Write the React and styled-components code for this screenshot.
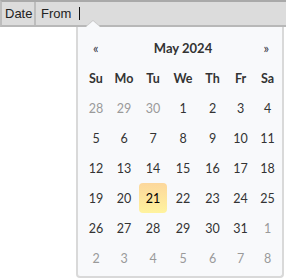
import React from 'react';
import styled, { createGlobalStyle } from 'styled-components';

const GlobalStyle = createGlobalStyle`
  html, body {
    margin: 0;
    padding: 0;
    background: #ffffff;
  }
  body {
    width: 286px;
    height: 280px;
    overflow: hidden;
    position: relative;
  }
`;

const weekdays = ['Su', 'Mo', 'Tu', 'We', 'Th', 'Fr', 'Sa'];

const weeks = [
  [[28, true], [29, true], [30, true], [1], [2], [3], [4]],
  [[5], [6], [7], [8], [9], [10], [11]],
  [[12], [13], [14], [15], [16], [17], [18]],
  [[19], [20], [21, false, true], [22], [23], [24], [25]],
  [[26], [27], [28], [29], [30], [31], [1, true]],
  [[2, true], [3, true], [4, true], [5, true], [6, true], [7, true], [8, true]],
];

function App() {
  return (
    <>
      <GlobalStyle />
      <HeaderBar>
        <HeaderCell>Date</HeaderCell>
        <HeaderCell $grow>
          From <Caret />
        </HeaderCell>
      </HeaderBar>
      <Picker>
        <Arrow />
        <Title>
          <Nav>«</Nav>
          <Month>May 2024</Month>
          <Nav>»</Nav>
        </Title>
        <Grid>
          {weekdays.map((d) => (
            <Weekday key={d}>{d}</Weekday>
          ))}
          {weeks.flat().map(([day, outside, selected], i) => (
            <Day key={i} $outside={outside} $selected={selected}>
              {day}
            </Day>
          ))}
        </Grid>
      </Picker>
    </>
  );
}

const HeaderBar = styled.div`
  display: flex;
  height: 23px;
  background: #dcdcdc;
  border-top: 2px solid #a9a9a9;
  border-bottom: 2px solid #b8b8b8;
  border-left: 2px solid #bdbdbd;
`;

const HeaderCell = styled.div`
  display: flex;
  align-items: center;
  gap: 6px;
  padding: 0 0 0 ${(p) => (p.$grow ? '5px' : '3px')};
  width: ${(p) => (p.$grow ? 'auto' : '29px')};
  flex: ${(p) => (p.$grow ? 1 : 'none')};
  border-right: ${(p) => (p.$grow ? 'none' : '2px solid #bdbdbd')};
  font-family: 'Liberation Sans', Arial, sans-serif;
  font-size: 13px;
  color: #222;
`;

const Caret = styled.span`
  display: inline-block;
  width: 1px;
  height: 13px;
  background: #111;
  margin-left: 2px;
`;

const Picker = styled.div`
  position: absolute;
  left: 76px;
  top: 27px;
  width: 204px;
  padding: 6px 0 3px;
  background: #f8f9fb;
  border: 2px solid #d9d9d9;
  border-top: none;
  border-radius: 0 0 4px 4px;
  font-family: Lato, 'Noto Sans', sans-serif;
`;

const Arrow = styled.div`
  position: absolute;
  left: 8px;
  top: -6px;
  width: 0;
  height: 0;
  border-left: 7px solid transparent;
  border-right: 7px solid transparent;
  border-bottom: 6px solid #f8f9fb;
  filter: drop-shadow(0 -1px 0 #c8c8c8);
`;

const Title = styled.div`
  display: flex;
  align-items: center;
  justify-content: space-between;
  height: 30px;
  padding: 0 13px 0 15px;
`;

const Nav = styled.span`
  font-size: 13px;
  color: #334;
`;

const Month = styled.span`
  font-size: 13px;
  font-weight: 700;
  color: #333;
  margin-left: 4px;
`;

const Grid = styled.div`
  display: grid;
  grid-template-columns: 28px 28px 30px 30px 29px 27px 27px;
  grid-auto-rows: 30px;
  margin-left: 4px;
`;

const Weekday = styled.div`
  display: flex;
  align-items: center;
  justify-content: center;
  font-size: 12.5px;
  font-weight: 700;
  color: #333;
`;

const Day = styled.div`
  display: flex;
  align-items: center;
  justify-content: center;
  margin: 0 1px;
  border-radius: 4px;
  font-size: 12.5px;
  color: ${(p) => (p.$outside ? '#9a9a9a' : p.$selected ? '#000' : '#333')};
  background: ${(p) =>
    p.$selected ? 'linear-gradient(to bottom, #fcd79c, #fff39e)' : 'transparent'};
`;

export default App;
